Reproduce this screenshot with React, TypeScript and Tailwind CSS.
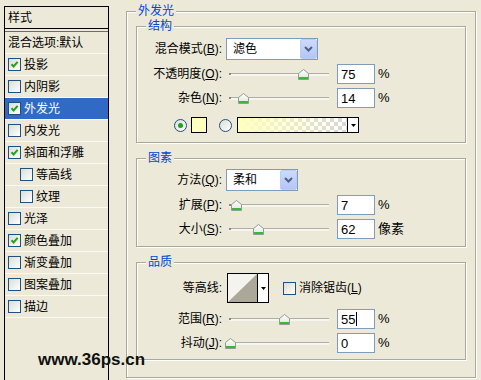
import React from "react";

const font = "font-['Liberation_Sans','Noto_Sans_CJK_SC',sans-serif]";

type Row = { label: string; box?: boolean; checked?: boolean; selected?: boolean; indent?: boolean };

const rows: Row[] = [
  { label: "混合选项:默认" },
  { label: "投影", box: true, checked: true },
  { label: "内阴影", box: true },
  { label: "外发光", box: true, checked: true, selected: true },
  { label: "内发光", box: true },
  { label: "斜面和浮雕", box: true, checked: true },
  { label: "等高线", box: true, indent: true },
  { label: "纹理", box: true, indent: true },
  { label: "光泽", box: true },
  { label: "颜色叠加", box: true, checked: true },
  { label: "渐变叠加", box: true },
  { label: "图案叠加", box: true },
  { label: "描边", box: true },
];

function CheckBox({ checked }: { checked?: boolean }) {
  return (
    <span className="flex h-[13px] w-[13px] shrink-0 items-center justify-center border border-[#1C5180] bg-gradient-to-br from-[#DCDCD7] to-white">
      {checked && (
        <svg width="9" height="9" viewBox="0 0 9 9">
          <path d="M1.5 4.2L3.6 6.4L7.6 1.8" fill="none" stroke="#21A121" strokeWidth="2" />
        </svg>
      )}
    </span>
  );
}

function Radio({ checked }: { checked?: boolean }) {
  return (
    <span className="flex h-[13px] w-[13px] shrink-0 items-center justify-center rounded-full border border-[#1C5180] bg-gradient-to-br from-[#DCDCD7] to-white">
      {checked && <span className="h-[5px] w-[5px] rounded-full bg-[#21A121]" />}
    </span>
  );
}

function Thumb({ left }: { left: number }) {
  return (
    <svg className="absolute top-[5px]" style={{ left }} width="11" height="11" viewBox="0 0 11 11">
      <defs>
        <linearGradient id="thumbFill" x1="0" y1="0" x2="0" y2="1">
          <stop offset="0" stopColor="#FFFFFF" />
          <stop offset="1" stopColor="#E3E2DA" />
        </linearGradient>
      </defs>
      <path d="M0.5 10.5V4.5L5.5 0.5L10.5 4.5V10.5Z" fill="url(#thumbFill)" stroke="#8F9C99" />
      <rect x="1" y="8" width="9" height="2" fill="#3DB43D" />
    </svg>
  );
}

function Slider({ at }: { at: number }) {
  // at = thumb centre, px from the start of the track
  return (
    <div className="relative ml-[7px] h-[20px] w-[100px] shrink-0">
      <div className="absolute left-0 right-0 top-[9px] h-[3px] border-t border-[#B0AFA6] bg-[#F6F5F0]" />
      <div className="absolute left-0 top-[9px] h-[2px] w-[2px] bg-[#8A897F]" />
      <Thumb left={at - 5} />
    </div>
  );
}

function NumBox({ value, cursor }: { value: string; cursor?: boolean }) {
  return (
    <div className="ml-[8px] flex h-[20px] w-[38px] shrink-0 items-center border border-[#7F9DB9] bg-white pl-[3px] text-[13px] leading-none">
      {value}
      {cursor && <span className="ml-[1px] h-[14px] w-[1px] bg-black" />}
    </div>
  );
}

function Chevron() {
  return (
    <span className="flex h-[20px] w-[17px] items-center justify-center rounded-[2px] border border-[#BBCCF5] bg-gradient-to-b from-[#CCDAFC] to-[#B3C6F4]">
      <svg width="9" height="6" viewBox="0 0 9 6">
        <path d="M1 1L4.5 4.5L8 1" fill="none" stroke="#4D6185" strokeWidth="2" />
      </svg>
    </span>
  );
}

function Combo({ text, w }: { text: string; w: string }) {
  return (
    <div className={`ml-[4px] flex h-[22px] ${w} items-center justify-between border border-[#7F9DB9] bg-white pl-[6px]`}>
      <span>{text}</span>
      <Chevron />
    </div>
  );
}

function Label({ text, k }: { text: string; k?: string }) {
  return (
    <div className="w-[76px] shrink-0 whitespace-nowrap text-right">
      {text}
      {k && (
        <>
          (<span className="underline">{k}</span>):
        </>
      )}
    </div>
  );
}

function SliderRow({ text, k, at, value, unit, cursor, mt }: { text: string; k: string; at: number; value: string; unit: string; cursor?: boolean; mt: string }) {
  return (
    <div className={`${mt} flex h-[20px] items-center`}>
      <Label text={text} k={k} />
      <Slider at={at} />
      <NumBox value={value} cursor={cursor} />
      <span className="ml-[3px] text-[13px]">{unit}</span>
    </div>
  );
}

const etched = "border border-[#ACA899] shadow-[1px_1px_0_#fff,inset_1px_1px_0_#fff]";

function Group({ title, h, mt, children }: { title: string; h: string; mt?: string; children: React.ReactNode }) {
  return (
    <fieldset className={`${h} ${mt ?? ""} ${etched} px-[9px]`}>
      <legend className="bg-[#ECE9D8] px-[2px] leading-[15px] text-[#0046D5]">{title}</legend>
      {children}
    </fieldset>
  );
}

function LeftPanel() {
  return (
    <div className="ml-[4px] mt-[6px] h-[400px] w-[105px] shrink-0 border border-black">
      <div className="flex h-[22px] items-center border-b border-black pl-[3px]">样式</div>
      <div className="h-[2px]" />
      <div className="border-t border-[#6F6D62]">
        {rows.map((r) => (
          <div
            key={r.label}
            className={`flex h-[22px] items-center border-b border-[#FAF9F3] pl-[3px] ${r.selected ? "bg-[#316AC5] text-white" : ""}`}
          >
            {r.box && (
              <span className={r.indent ? "ml-[12px]" : ""}>
                <CheckBox checked={r.checked} />
              </span>
            )}
            <span className={r.box ? "ml-[3px]" : ""}>{r.label}</span>
          </div>
        ))}
      </div>
    </div>
  );
}

export default function App() {
  return (
    <div className={`relative flex h-[380px] w-[481px] overflow-hidden bg-[#ECE9D8] text-[12px] text-black ${font}`}>
      <LeftPanel />

      <fieldset className={`ml-[17px] mt-[4px] h-[374px] w-[350px] shrink-0 ${etched} px-[9px]`}>
        <legend className="bg-[#ECE9D8] px-[2px] leading-[15px] text-[#0046D5]">外发光</legend>

        <Group title="结构" h="h-[124px]">
          <div className="mt-[4px] flex h-[22px] items-center">
            <Label text="混合模式" k="B" />
            <Combo text="滤色" w="w-[92px]" />
          </div>
          <SliderRow mt="mt-[4px]" text="不透明度" k="O" at={74} value="75" unit="%" />
          <SliderRow mt="mt-[4px]" text="杂色" k="N" at={14} value="14" unit="%" />
          <div className="ml-[28px] mt-[9px] flex h-[16px] items-center">
            <Radio checked />
            <span className="ml-[4px] h-[16px] w-[16px] border border-black bg-[#FFFFC0]" />
            <span className="ml-[12px]">
              <Radio />
            </span>
            <div className="ml-[5px] flex h-[16px] w-[122px] border border-black">
              <div className="flex-1 bg-[linear-gradient(to_right,#ffffc0,rgba(255,255,192,0)),repeating-conic-gradient(#d6d6d6_0_25%,#ffffff_0_50%)] bg-[length:100%_100%,8px_8px]" />
              <div className="flex w-[11px] items-center justify-center border-l border-black bg-white">
                <svg width="5" height="3" viewBox="0 0 5 3">
                  <path d="M0 0H5L2.5 3Z" fill="#000" />
                </svg>
              </div>
            </div>
          </div>
        </Group>

        <Group title="图素" h="h-[96px]" mt="mt-[8px]">
          <div className="mt-[3px] flex h-[22px] items-center">
            <Label text="方法" k="Q" />
            <Combo text="柔和" w="w-[72px]" />
          </div>
          <SliderRow mt="mt-[4px]" text="扩展" k="P" at={7} value="7" unit="%" />
          <SliderRow mt="mt-[4px]" text="大小" k="S" at={29} value="62" unit="像素" />
        </Group>

        <Group title="品质" h="h-[105px]" mt="mt-[8px]">
          <div className="mt-[3px] flex h-[30px] items-center">
            <Label text="等高线:" />
            <div className="ml-[5px] flex h-[30px] w-[42px] border border-black bg-white">
              <svg width="29" height="28" viewBox="0 0 29 28" className="shrink-0">
                <rect x="0" y="0" width="29" height="28" fill="#F4F3EE" />
                <path d="M0 28L29 0V28Z" fill="#ACA899" />
              </svg>
              <div className="flex flex-1 items-center justify-center border-l border-black">
                <svg width="5" height="3" viewBox="0 0 5 3">
                  <path d="M0 0H5L2.5 3Z" fill="#000" />
                </svg>
              </div>
            </div>
            <span className="ml-[14px]">
              <CheckBox />
            </span>
            <span className="ml-[3px]">
              消除锯齿(<span className="underline">L</span>)
            </span>
          </div>
          <SliderRow mt="mt-[6px]" text="范围" k="R" at={55} value="55" unit="%" cursor />
          <SliderRow mt="mt-[4px]" text="抖动" k="J" at={1} value="0" unit="%" />
        </Group>
      </fieldset>

      <div className="absolute left-[38px] top-[351px] text-[17px] font-bold leading-none text-[#111]">www.36ps.cn</div>
    </div>
  );
}
